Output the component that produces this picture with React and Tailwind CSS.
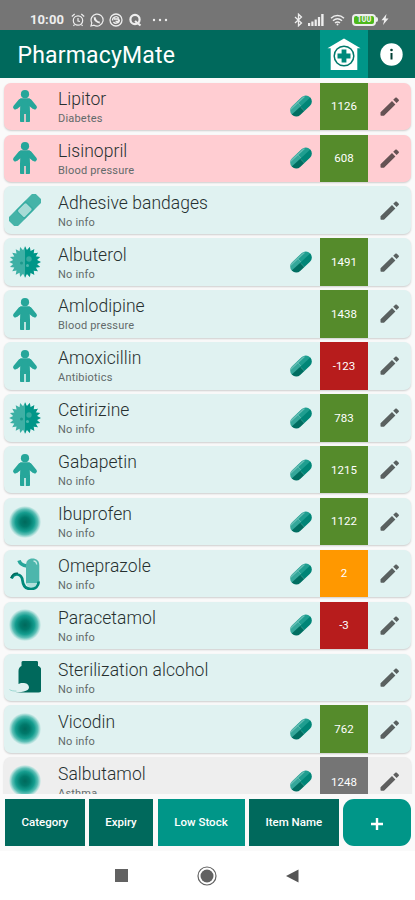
import React from "react";

const ROWS = [
  ["person", "Lipitor", "Diabetes", true, "1126", "green", "pink"],
  ["person", "Lisinopril", "Blood pressure", true, "608", "green", "pink"],
  ["bandage", "Adhesive bandages", "No info", false, null, null, "mint"],
  ["virus", "Albuterol", "No info", true, "1491", "green", "mint"],
  ["person", "Amlodipine", "Blood pressure", false, "1438", "green", "mint"],
  ["person", "Amoxicillin", "Antibiotics", true, "-123", "red", "mint"],
  ["virus", "Cetirizine", "No info", true, "783", "green", "mint"],
  ["person", "Gabapetin", "No info", true, "1215", "green", "mint"],
  ["glow", "Ibuprofen", "No info", true, "1122", "green", "mint"],
  ["stomach", "Omeprazole", "No info", true, "2", "orange", "mint"],
  ["glow", "Paracetamol", "No info", true, "-3", "red", "mint"],
  ["bottle", "Sterilization alcohol", "No info", false, null, null, "mint"],
  ["glow", "Vicodin", "No info", true, "762", "green", "mint"],
  ["glow", "Salbutamol", "Asthma", true, "1248", "gray", "gray"],
];

const ROW_BG = { pink: "bg-[#ffcdd2]", mint: "bg-[#e0f2f1]", gray: "bg-[#eeeeee]" };
const BADGE_BG = {
  green: "bg-[#558b2b]",
  red: "bg-[#b71c1c]",
  orange: "bg-[#ff9800]",
  gray: "bg-[#757575]",
};

const spikes = Array.from({ length: 40 }, (_, i) => {
  const r = i % 2 ? 12 : 15.8;
  const a = (i * Math.PI) / 20;
  return `${(16 + r * Math.sin(a)).toFixed(2)},${(16 - r * Math.cos(a)).toFixed(2)}`;
}).join(" ");

function ItemIcon({ kind }) {
  return (
    <svg viewBox="0 0 32 32" className="block h-8 w-8">
      {kind === "person" && (
        <g fill="#26a69a">
          <circle cx="16" cy="4.200" r="4.100" />
          <path d="M11.500 8.500h9L21 22v9.200c0 .5-.3.800-.8.800h-3.400v-8h-1.600v8h-3.400c-.5 0-.8-.3-.8-.8V22z" />
          <path d="M11.500 8.500h9l6.500 8-3 2.500-5-4h-6l-5 4-3-2.500z" />
          <path d="M11.500 11 6.300 17.200M20.500 11l5.200 6.200" stroke="#26a69a" strokeWidth="4.400" strokeLinecap="round" />
        </g>
      )}
      {kind === "bandage" && (
        <g transform="rotate(-45 16 16)">
          <rect x="-3" y="9.600" width="38" height="12.800" rx="3.500" fill="#45b3a8" />
          <path d="M9 9.600h14v12.800H9z" fill="#26a69a" opacity=".4" />
          <rect x="10" y="11.300" width="11.500" height="9.400" rx="1.500" fill="#a7dbd6" />
        </g>
      )}
      {kind === "virus" && (
        <g>
          <polygon points={spikes} fill="#3eb0a5" />
          <clipPath id="right-half"><path d="M16 0h16v32H16z" /></clipPath>
          <polygon points={spikes} fill="#009688" clipPath="url(#right-half)" />
          <circle cx="20" cy="13" r="2.700" fill="#36ab9f" />
          <circle cx="12.500" cy="17" r="1.500" fill="#1c998c" />
          <circle cx="18.500" cy="19.500" r="1.500" fill="#4db6ac" />
        </g>
      )}
      {kind === "glow" && (
        <g>
          <radialGradient id="glow-fill">
            <stop offset="0" stopColor="#00695c" />
            <stop offset=".3" stopColor="#00796b" />
            <stop offset=".6" stopColor="#159d8f" />
            <stop offset=".82" stopColor="#62c1b8" />
            <stop offset="1" stopColor="#bfe5e1" stopOpacity=".6" />
          </radialGradient>
          <circle cx="16" cy="16" r="15.800" fill="url(#glow-fill)" />
        </g>
      )}
      {kind === "stomach" && (
        <g fill="none">
          <path d="M10 2.500C11 5.500 13.500 7.500 18 8" stroke="#26a69a" strokeWidth="3.600" />
          <path d="M17 26V7.500C17 3 19.500.5 23.500.5S30.300 3 30.300 7.500V26z" fill="#4db6ac" />
          <path d="M24.500 3c2 0 3 1 3.200 3.500" stroke="#c4e9e5" strokeWidth="1.300" />
          <path d="M17 25h13c-1.500 3.500-3.500 5-6.500 5S18 28.500 17 25z" fill="#b2dfdb" />
          <path d="M2.500 20.500C4 17.300 6 16 8.500 16.500C12 17 13.200 19.500 13.500 22.500C14 28 17 31 22 31C26.500 31 29.500 28 29.700 23.500" stroke="#00897b" strokeWidth="2.700" />
          <path d="M1.800 20C3.500 16 6 14.800 9 15.300" stroke="#00695c" strokeWidth="1.500" />
        </g>
      )}
      {kind === "bottle" && (
        <g fill="#00695c">
          <path d="M14.500 0h13c1 0 1.500.5 1.500 1.500v3.500h.5c2 1 3 2.500 3 5v18.500c0 2-1 3-3 3H3c9 0 17-1 17-5 0-4-4-5-8-4.500l-2.500 1V10c0-2.500 1-4 3-5V1.500C12.500.5 13.200 0 14.500 0z" />
          <path d="M.5 28.500c1.500 1.300 4 1.500 7 1.600" fill="none" stroke="#80cbc4" strokeWidth=".7" />
        </g>
      )}
    </svg>
  );
}

function Pill() {
  return (
    <svg viewBox="0 0 22 22" className="block h-[22px] w-[22px]">
      <clipPath id="capsule"><rect x="-1.500" y="5" width="25" height="12" rx="5.800" /></clipPath>
      <g transform="rotate(-43 11 11)" clipPath="url(#capsule)">
        <path d="M-2 4h13v8H-2z" fill="#35a79a" />
        <path d="M11 4h13v8H11z" fill="#1f9e90" />
        <path d="M-2 11h12v7H-2z" fill="#006e61" />
        <path d="M10 11h14v7H10z" fill="#008577" />
        <path d="M0 6.300h20" stroke="#66beb5" strokeWidth="1.400" />
      </g>
    </svg>
  );
}

function Pencil() {
  return (
    <svg viewBox="0 0 19 19" className="block h-[19px] w-[19px] fill-black/60">
      <path d="M.5 15.300 12 4l3.400 3.400L4 18.700H1.200c-.4 0-.7-.3-.7-.7zM13.200 2.800 15.300.8c.5-.5 1-.5 1.500 0l1.800 1.800c.5.500.5 1 0 1.500l-2 2z" />
    </svg>
  );
}

function StatusBar() {
  return (
    <div className="flex h-[30px] items-center bg-[#757575] pt-[9px] pl-[30px] text-[#eeeeee]">
      <span className="w-[41px] text-[13px] leading-none font-bold tracking-[0.100px]">10:00</span>
      <svg width="14" height="14" viewBox="0 0 14 14" fill="none" stroke="currentColor" strokeWidth="1.200">
        <circle cx="7" cy="7.500" r="4.700" />
        <path d="M.8 3.500 3.700 1M13.200 3.500 10.300 1M7 5v3l2 .5M3.500 11.500l-1 1.500M10.500 11.500l1 1.500" />
      </svg>
      <svg className="ml-[5px]" width="14" height="14" viewBox="0 0 14 14" fill="none" stroke="currentColor" strokeWidth="1.200">
        <path d="M1 13l.8-3.100A6 6 0 1 1 4 12.200z" />
        <path d="M4.700 4.200C4.500 7 7 9.500 9.800 9.400" strokeWidth="2" />
      </svg>
      <svg className="ml-[5px]" width="14" height="14" viewBox="0 0 14 14" fill="none" stroke="currentColor" strokeWidth="1.300">
        <circle cx="7" cy="7" r="6" />
        <path d="M3.600 7.500a3.400 3.400 0 0 1 6-2.500M10.400 6.500a3.400 3.400 0 0 1-6 2.500M5 6h4.500v2.500H6.500" />
      </svg>
      <svg className="ml-[6px]" width="13" height="14" viewBox="0 0 13 14" fill="none" stroke="currentColor" strokeWidth="2.200">
        <circle cx="6" cy="6.500" r="4.600" />
        <path d="M6 8l5.500 4.500" />
      </svg>
      <svg className="ml-[10px]" width="16" height="4" viewBox="0 0 16 4" fill="currentColor">
        <circle cx="2" cy="2" r="1.200" /><circle cx="8" cy="2" r="1.200" /><circle cx="14" cy="2" r="1.200" />
      </svg>
      <svg className="ml-[126px]" width="9" height="14" viewBox="0 0 9 14" fill="none" stroke="currentColor" strokeWidth="1.300">
        <path d="M1 4l6.500 6L4.500 12.800V1.200L7.500 4 1 10" />
      </svg>
      <svg className="ml-[5px]" width="16" height="12" viewBox="0 0 16 12" fill="currentColor">
        <path d="M0 9h2.200v3H0zM3.300 7.500h2.200V12H3.300zM6.600 5.500h2.200V12H6.600zM9.900 3h2.200v9H9.900zM13.200 0h2.400v12h-2.400z" />
      </svg>
      <svg className="ml-[6px]" width="15" height="12" viewBox="0 0 15 12" fill="none" stroke="currentColor" strokeWidth="1.500">
        <path d="M1 4.200c3.800-3.500 9.200-3.500 13 0M3 6.700c2.700-2.400 6.300-2.400 9 0M5 9c1.500-1.300 3.500-1.300 5 0" />
        <circle cx="7.500" cy="10.500" r="1" fill="currentColor" stroke="none" />
      </svg>
      <span className="ml-[7px] flex h-[12px] w-[24px] items-center justify-center rounded-[4px] border-2 border-[#eeeeee] bg-[#4cb81c] text-[8.500px] leading-none font-bold">100</span>
      <span className="h-[5px] w-[2px] rounded-r bg-[#eeeeee]" />
      <svg className="ml-[3px]" width="8" height="11" viewBox="0 0 8 11" fill="currentColor">
        <path d="M5.500 0 .5 6.300h2.700L2 11l5.500-6.500H4.600z" />
      </svg>
    </div>
  );
}

function Header() {
  return (
    <header className="flex h-12 items-center bg-[#00695c] text-white">
      <h1 className="w-[320px] pl-[17.500px] pt-[3px] text-[23px] leading-none tracking-[0.180px]">PharmacyMate</h1>
      <div className="flex h-12 w-12 items-center justify-center bg-[#009688]">
        <svg width="34" height="34" viewBox="0 0 34 34">
          <path d="M17 1.500 .5 11.200h3.200V33h26.600V11.200h3.200z" fill="#fff" />
          <circle cx="17" cy="19" r="9.800" fill="none" stroke="#00796b" strokeWidth="1.500" />
          <path d="M14.600 12.500h4.800v4.100h4.100v4.800h-4.100v4.100h-4.800v-4.100h-4.100v-4.800h4.100z" fill="#00897b" />
        </svg>
      </div>
      <svg className="ml-[12px]" width="23" height="23" viewBox="0 0 23 23">
        <circle cx="11.500" cy="11.500" r="11.200" fill="#fff" />
        <circle cx="11.500" cy="7" r="1.300" fill="#003d33" />
        <path d="M10.500 10h2v6.500h-2z" fill="#003d33" />
      </svg>
    </header>
  );
}

function Row({ row }) {
  const [kind, title, sub, pill, count, color, tone] = row;
  const cut = tone === "gray";
  return (
    <li className={`flex h-[47.500px] shrink-0 items-center overflow-hidden rounded-[7px] shadow-[0_1px_2px_rgba(0,0,0,0.18)] ${ROW_BG[tone]}`}>
      <div className="ml-[5px] w-[49px]"><ItemIcon kind={kind} /></div>
      <div className="w-[228px] pt-[2px] whitespace-nowrap">
        <div className="text-[17.500px] leading-[21px] font-light tracking-[0.050px] text-[#263030]">{title}</div>
        <div className="pt-[2px] text-[11px] leading-[14px] tracking-[0.200px] text-[#626a6a]">{sub}</div>
      </div>
      <div className="ml-[4px] w-[30px]">{pill && <Pill />}</div>
      <div className={`flex h-full w-12 items-center justify-center text-[11.500px] text-white ${cut ? "pt-[3px]" : "pt-[1px]"} ${color ? BADGE_BG[color] : ""}`}>
        {count}
      </div>
      <div className="ml-[12px]"><Pencil /></div>
    </li>
  );
}

const TAB = "flex h-[47.500px] items-center justify-center pt-[1px] text-[11.500px] font-medium text-white";

export default function App() {
  return (
    <div className="flex h-[900px] w-[415px] flex-col overflow-hidden bg-white font-[Roboto,sans-serif]">
      <StatusBar />
      <Header />
      <ul className="flex h-[716px] flex-col gap-[4.420px] overflow-hidden bg-[#fafafa] px-[4px] pt-[4.600px]">
        {ROWS.map((r) => <Row key={r[1]} row={r} />)}
      </ul>
      <nav className="flex h-[57px] shrink-0 gap-[4.500px] bg-[#fafafa] pt-[4.600px] pl-[5px]">
        <button className={`${TAB} w-[79.500px] bg-[#00695c]`}>Category</button>
        <button className={`${TAB} w-[64px] bg-[#00695c]`}>Expiry</button>
        <button className={`${TAB} w-[87px] bg-[#009688]`}>Low Stock</button>
        <button className={`${TAB} w-[89.500px] bg-[#00695c]`}>Item Name</button>
        <button className={`${TAB} w-[68px] rounded-[11px] bg-[#009688]`}>
          <svg width="12" height="12" viewBox="0 0 12 12" className="mt-[2px]" stroke="#fff" strokeWidth="2.400"><path d="M6 0v12M0 6h12" /></svg>
        </button>
      </nav>
      <div className="flex h-[49px] items-center pl-[115px]">
        <span className="h-[13px] w-[13px] bg-[#626262]" />
        <svg className="ml-[69px]" width="20" height="20" viewBox="0 0 20 20">
          <circle cx="10" cy="10" r="9" fill="none" stroke="#626262" strokeWidth="1.200" />
          <circle cx="10" cy="10" r="6.500" fill="#626262" />
        </svg>
        <svg className="ml-[69px]" width="13" height="14" viewBox="0 0 13 14"><path d="M0 7 12.500.5v13z" fill="#555" /></svg>
      </div>
    </div>
  );
}
